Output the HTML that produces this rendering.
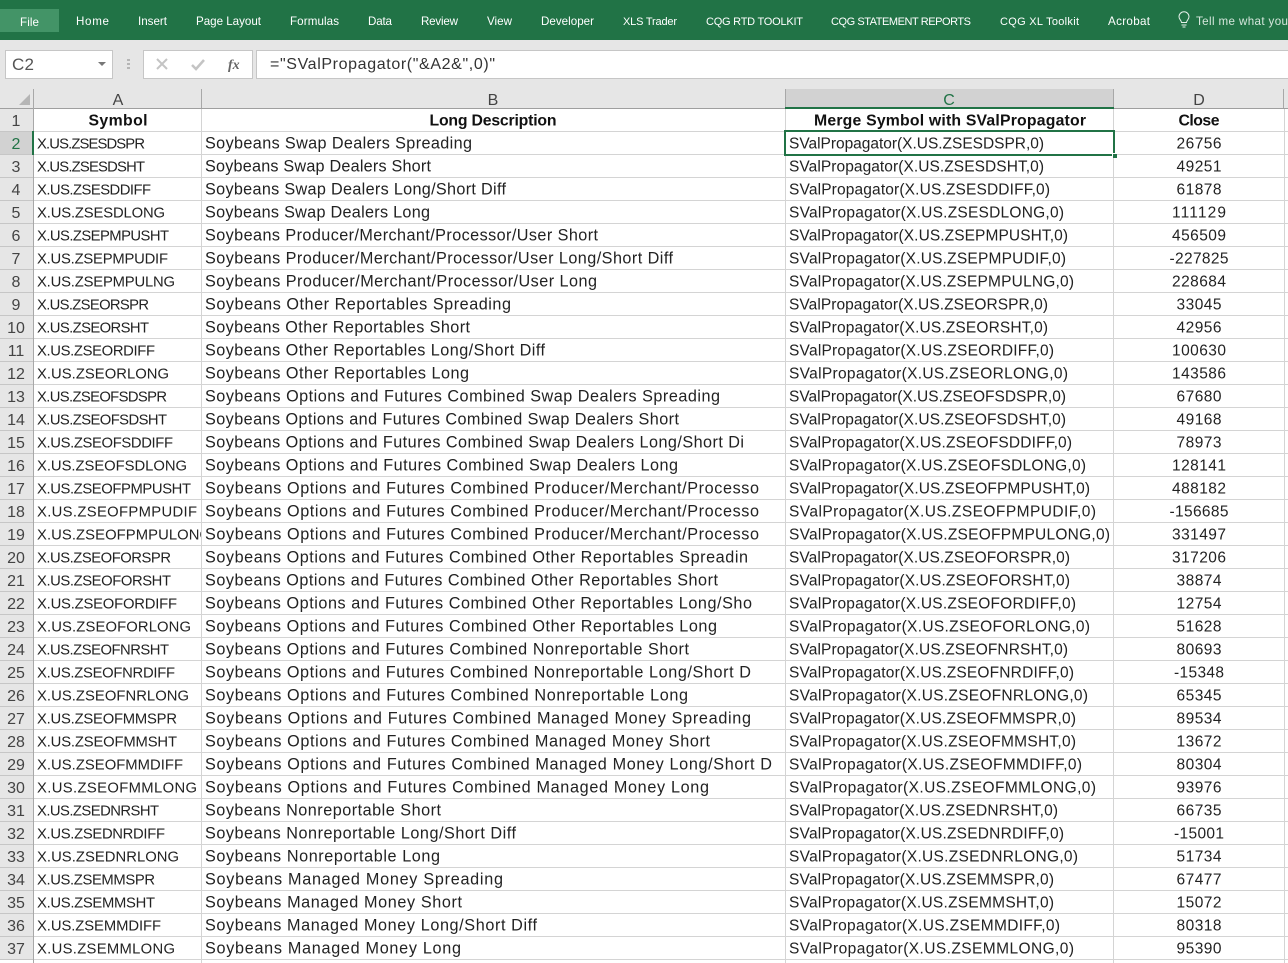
<!DOCTYPE html>
<html><head><meta charset="utf-8"><title>Excel</title>
<style>
html,body{margin:0;padding:0;background:#fff;overflow:hidden}
svg{display:block;font-family:"Liberation Sans",sans-serif}
.t text{font-size:11.6px;fill:#fff}
.t text.c{font-size:11px}
.g text{font-size:15.5px;fill:#222}
.g.a text{font-size:14.8px}
.g.b text{font-size:16.2px}
.h text{font-size:15.8px;font-weight:bold;fill:#111;text-anchor:middle}
.d text{font-size:15.5px;fill:#222;text-anchor:middle}
.r text{font-size:16px;fill:#444;text-anchor:middle}
</style></head><body>
<svg xmlns="http://www.w3.org/2000/svg" width="1288" height="963" viewBox="0 0 1288 963">
<defs><clipPath id="ca"><rect x="33" y="120" width="168" height="900"/></clipPath></defs>
<rect width="1288" height="963" fill="#fff"/>
<rect width="1288" height="40" fill="#217346"/>
<rect y="9" width="59" height="23" fill="#439467"/>
<g class="t">
<text x="20" y="26" textLength="19">File</text>
<text x="76" y="25" textLength="33">Home</text>
<text x="138" y="25" textLength="29">Insert</text>
<text x="196" y="25" textLength="65">Page Layout</text>
<text x="290" y="25" textLength="49">Formulas</text>
<text x="368" y="25" textLength="24">Data</text>
<text x="421" y="25" textLength="37">Review</text>
<text x="487" y="25" textLength="25">View</text>
<text x="541" y="25" textLength="53">Developer</text>
<text class="c" x="623" y="25" textLength="54">XLS Trader</text>
<text class="c" x="706" y="25" textLength="97">CQG RTD TOOLKIT</text>
<text class="c" x="831" y="25" textLength="140">CQG STATEMENT REPORTS</text>
<text class="c" x="1000" y="25" textLength="79">CQG XL Toolkit</text>
<text x="1108" y="25" textLength="42">Acrobat</text>
<text x="1196" y="25" textLength="92" style="fill:#d5e6dc">Tell me what you</text>
</g>
<path d="M1181.5 22.5c0-2-2.500-3-2.500-5.700a5 5 0 0 1 10 0c0 2.700-2.500 3.700-2.500 5.700zM1181.500 25h5M1182.500 27h3" fill="none" stroke="#e6f0ea" stroke-width="1"/>

<rect y="40" width="1288" height="69" fill="#e6e6e6"/>
<rect x="5.500" y="50.500" width="107" height="28" fill="#fff" stroke="#c6c6c6"/>
<text x="12" y="70" font-size="17" fill="#555" textLength="22">C2</text>
<path d="M98 62h8l-4 4z" fill="#777"/>
<path d="M127 59h3v2h-3zM127 63h3v2h-3zM127 67h3v2h-3z" fill="#b5b5b5"/>
<rect x="143.500" y="50.500" width="109" height="28" fill="#fff" stroke="#c6c6c6"/>
<path d="M157 59l10 10M167 59l-10 10" stroke="#c4c4c4" stroke-width="2" fill="none"/>
<path d="M192 65l4 4 8-9" stroke="#c4c4c4" stroke-width="2.500" fill="none"/>
<text x="228" y="69" font-size="14" font-style="italic" font-weight="bold" fill="#666" style="font-family:'Liberation Serif',serif">fx</text>
<rect x="256.500" y="50.500" width="1033" height="28" fill="#fff" stroke="#c6c6c6"/>
<text x="270" y="69" font-size="16" fill="#333" textLength="225">="SValPropagator("&amp;A2&amp;",0)"</text>

<path d="M30 94v11H19z" fill="#b5b5b5"/>
<rect x="0" y="109" width="33" height="851" fill="#e6e6e6"/>
<rect x="785" y="89" width="328" height="19" fill="#d2d2d2"/>
<rect x="0" y="132" width="33" height="23" fill="#d2d2d2"/>

<path d="M0 108.500H1288" stroke="#9f9f9f"/>
<path d="M33.500 89V963M201.500 89V108M785.500 89V108M1113.500 89V108M1283.500 89V108" stroke="#a8a8a8" fill="none"/>
<path d="M201.500 109V963M785.500 109V963M1113.500 109V963M1284.500 109V963" stroke="#d4d4d4" fill="none"/>
<path stroke="#d4d4d4" fill="none" d="M34 131.500H1288M34 154.500H1288M34 177.500H1288M34 200.500H1288M34 223.500H1288M34 246.500H1288M34 269.500H1288M34 292.500H1288M34 315.500H1288M34 338.500H1288M34 361.500H1288M34 384.500H1288M34 407.500H1288M34 430.500H1288M34 453.500H1288M34 476.500H1288M34 499.500H1288M34 522.500H1288M34 545.500H1288M34 568.500H1288M34 591.500H1288M34 614.500H1288M34 637.500H1288M34 660.500H1288M34 683.500H1288M34 706.500H1288M34 729.500H1288M34 752.500H1288M34 775.500H1288M34 798.500H1288M34 821.500H1288M34 844.500H1288M34 867.500H1288M34 890.500H1288M34 913.500H1288M34 936.500H1288M34 959.500H1288"/>
<path stroke="#c6c6c6" fill="none" d="M0 131.500H33M0 154.500H33M0 177.500H33M0 200.500H33M0 223.500H33M0 246.500H33M0 269.500H33M0 292.500H33M0 315.500H33M0 338.500H33M0 361.500H33M0 384.500H33M0 407.500H33M0 430.500H33M0 453.500H33M0 476.500H33M0 499.500H33M0 522.500H33M0 545.500H33M0 568.500H33M0 591.500H33M0 614.500H33M0 637.500H33M0 660.500H33M0 683.500H33M0 706.500H33M0 729.500H33M0 752.500H33M0 775.500H33M0 798.500H33M0 821.500H33M0 844.500H33M0 867.500H33M0 890.500H33M0 913.500H33M0 936.500H33M0 959.500H33"/>

<g font-size="16" fill="#444" text-anchor="middle">
<text x="118" y="105">A</text><text x="493" y="105">B</text><text x="949" y="105" fill="#217346">C</text><text x="1199" y="105">D</text>
</g>

<g class="r">
<text x="16" y="126">1</text><text x="16" y="149" style="fill:#217346">2</text><text x="16" y="172">3</text><text x="16" y="195">4</text><text x="16" y="218">5</text><text x="16" y="241">6</text><text x="16" y="264">7</text><text x="16" y="287">8</text><text x="16" y="310">9</text><text x="16" y="333">10</text><text x="16" y="356">11</text><text x="16" y="379">12</text><text x="16" y="402">13</text><text x="16" y="425">14</text><text x="16" y="448">15</text><text x="16" y="471">16</text><text x="16" y="494">17</text><text x="16" y="517">18</text><text x="16" y="540">19</text><text x="16" y="563">20</text><text x="16" y="586">21</text><text x="16" y="609">22</text><text x="16" y="632">23</text><text x="16" y="655">24</text><text x="16" y="678">25</text><text x="16" y="701">26</text><text x="16" y="724">27</text><text x="16" y="747">28</text><text x="16" y="770">29</text><text x="16" y="793">30</text><text x="16" y="816">31</text><text x="16" y="839">32</text><text x="16" y="862">33</text><text x="16" y="885">34</text><text x="16" y="908">35</text><text x="16" y="931">36</text><text x="16" y="954">37</text>
</g>

<g class="h">
<text x="118" y="125.500" textLength="59">Symbol</text>
<text x="493" y="125.500" textLength="127">Long Description</text>
<text x="950" y="125.500" textLength="272">Merge Symbol with SValPropagator</text>
<text x="1199" y="125.500" textLength="41">Close</text>
</g>

<g class="g a">
<text x="37" y="148.500" textLength="108">X.US.ZSESDSPR</text>
<text x="37" y="171.500" textLength="108">X.US.ZSESDSHT</text>
<text x="37" y="194.500" textLength="114">X.US.ZSESDDIFF</text>
<text x="37" y="217.500" textLength="128">X.US.ZSESDLONG</text>
<text x="37" y="240.500" textLength="132">X.US.ZSEPMPUSHT</text>
<text x="37" y="263.500" textLength="131">X.US.ZSEPMPUDIF</text>
<text x="37" y="286.500" textLength="138">X.US.ZSEPMPULNG</text>
<text x="37" y="309.500" textLength="112">X.US.ZSEORSPR</text>
<text x="37" y="332.500" textLength="112">X.US.ZSEORSHT</text>
<text x="37" y="355.500" textLength="118">X.US.ZSEORDIFF</text>
<text x="37" y="378.500" textLength="132">X.US.ZSEORLONG</text>
<text x="37" y="401.500" textLength="130">X.US.ZSEOFSDSPR</text>
<text x="37" y="424.500" textLength="130">X.US.ZSEOFSDSHT</text>
<text x="37" y="447.500" textLength="136">X.US.ZSEOFSDDIFF</text>
<text x="37" y="470.500" textLength="150">X.US.ZSEOFSDLONG</text>
<text x="37" y="493.500" textLength="154">X.US.ZSEOFPMPUSHT</text>
<text x="37" y="516.500" textLength="160">X.US.ZSEOFPMPUDIF</text>
<g clip-path="url(#ca)"><text x="37" y="539.500" textLength="174">X.US.ZSEOFPMPULONG</text></g>
<text x="37" y="562.500" textLength="134">X.US.ZSEOFORSPR</text>
<text x="37" y="585.500" textLength="134">X.US.ZSEOFORSHT</text>
<text x="37" y="608.500" textLength="140">X.US.ZSEOFORDIFF</text>
<text x="37" y="631.500" textLength="154">X.US.ZSEOFORLONG</text>
<text x="37" y="654.500" textLength="132">X.US.ZSEOFNRSHT</text>
<text x="37" y="677.500" textLength="138">X.US.ZSEOFNRDIFF</text>
<text x="37" y="700.500" textLength="152">X.US.ZSEOFNRLONG</text>
<text x="37" y="723.500" textLength="140">X.US.ZSEOFMMSPR</text>
<text x="37" y="746.500" textLength="140">X.US.ZSEOFMMSHT</text>
<text x="37" y="769.500" textLength="146">X.US.ZSEOFMMDIFF</text>
<text x="37" y="792.500" textLength="160">X.US.ZSEOFMMLONG</text>
<text x="37" y="815.500" textLength="122">X.US.ZSEDNRSHT</text>
<text x="37" y="838.500" textLength="128">X.US.ZSEDNRDIFF</text>
<text x="37" y="861.500" textLength="142">X.US.ZSEDNRLONG</text>
<text x="37" y="884.500" textLength="118">X.US.ZSEMMSPR</text>
<text x="37" y="907.500" textLength="118">X.US.ZSEMMSHT</text>
<text x="37" y="930.500" textLength="124">X.US.ZSEMMDIFF</text>
<text x="37" y="953.500" textLength="138">X.US.ZSEMMLONG</text>
</g>

<g class="g b">
<text x="205" y="148.500" textLength="267">Soybeans Swap Dealers Spreading</text>
<text x="205" y="171.500" textLength="226">Soybeans Swap Dealers Short</text>
<text x="205" y="194.500" textLength="301">Soybeans Swap Dealers Long/Short Diff</text>
<text x="205" y="217.500" textLength="225">Soybeans Swap Dealers Long</text>
<text x="205" y="240.500" textLength="393">Soybeans Producer/Merchant/Processor/User Short</text>
<text x="205" y="263.500" textLength="468">Soybeans Producer/Merchant/Processor/User Long/Short Diff</text>
<text x="205" y="286.500" textLength="392">Soybeans Producer/Merchant/Processor/User Long</text>
<text x="205" y="309.500" textLength="306">Soybeans Other Reportables Spreading</text>
<text x="205" y="332.500" textLength="265">Soybeans Other Reportables Short</text>
<text x="205" y="355.500" textLength="340">Soybeans Other Reportables Long/Short Diff</text>
<text x="205" y="378.500" textLength="264">Soybeans Other Reportables Long</text>
<text x="205" y="401.500" textLength="515">Soybeans Options and Futures Combined Swap Dealers Spreading</text>
<text x="205" y="424.500" textLength="474">Soybeans Options and Futures Combined Swap Dealers Short</text>
<text x="205" y="447.500" textLength="539">Soybeans Options and Futures Combined Swap Dealers Long/Short Di</text>
<text x="205" y="470.500" textLength="473">Soybeans Options and Futures Combined Swap Dealers Long</text>
<text x="205" y="493.500" textLength="554">Soybeans Options and Futures Combined Producer/Merchant/Processo</text>
<text x="205" y="516.500" textLength="554">Soybeans Options and Futures Combined Producer/Merchant/Processo</text>
<text x="205" y="539.500" textLength="554">Soybeans Options and Futures Combined Producer/Merchant/Processo</text>
<text x="205" y="562.500" textLength="543">Soybeans Options and Futures Combined Other Reportables Spreadin</text>
<text x="205" y="585.500" textLength="513">Soybeans Options and Futures Combined Other Reportables Short</text>
<text x="205" y="608.500" textLength="547">Soybeans Options and Futures Combined Other Reportables Long/Sho</text>
<text x="205" y="631.500" textLength="512">Soybeans Options and Futures Combined Other Reportables Long</text>
<text x="205" y="654.500" textLength="484">Soybeans Options and Futures Combined Nonreportable Short</text>
<text x="205" y="677.500" textLength="546">Soybeans Options and Futures Combined Nonreportable Long/Short D</text>
<text x="205" y="700.500" textLength="483">Soybeans Options and Futures Combined Nonreportable Long</text>
<text x="205" y="723.500" textLength="546">Soybeans Options and Futures Combined Managed Money Spreading</text>
<text x="205" y="746.500" textLength="505">Soybeans Options and Futures Combined Managed Money Short</text>
<text x="205" y="769.500" textLength="567">Soybeans Options and Futures Combined Managed Money Long/Short D</text>
<text x="205" y="792.500" textLength="504">Soybeans Options and Futures Combined Managed Money Long</text>
<text x="205" y="815.500" textLength="236">Soybeans Nonreportable Short</text>
<text x="205" y="838.500" textLength="311">Soybeans Nonreportable Long/Short Diff</text>
<text x="205" y="861.500" textLength="235">Soybeans Nonreportable Long</text>
<text x="205" y="884.500" textLength="298">Soybeans Managed Money Spreading</text>
<text x="205" y="907.500" textLength="257">Soybeans Managed Money Short</text>
<text x="205" y="930.500" textLength="332">Soybeans Managed Money Long/Short Diff</text>
<text x="205" y="953.500" textLength="256">Soybeans Managed Money Long</text>
</g>

<g class="g">
<text x="789" y="148.500" textLength="255">SValPropagator(X.US.ZSESDSPR,0)</text>
<text x="789" y="171.500" textLength="255">SValPropagator(X.US.ZSESDSHT,0)</text>
<text x="789" y="194.500" textLength="261">SValPropagator(X.US.ZSESDDIFF,0)</text>
<text x="789" y="217.500" textLength="275">SValPropagator(X.US.ZSESDLONG,0)</text>
<text x="789" y="240.500" textLength="279">SValPropagator(X.US.ZSEPMPUSHT,0)</text>
<text x="789" y="263.500" textLength="277">SValPropagator(X.US.ZSEPMPUDIF,0)</text>
<text x="789" y="286.500" textLength="285">SValPropagator(X.US.ZSEPMPULNG,0)</text>
<text x="789" y="309.500" textLength="259">SValPropagator(X.US.ZSEORSPR,0)</text>
<text x="789" y="332.500" textLength="259">SValPropagator(X.US.ZSEORSHT,0)</text>
<text x="789" y="355.500" textLength="265">SValPropagator(X.US.ZSEORDIFF,0)</text>
<text x="789" y="378.500" textLength="279">SValPropagator(X.US.ZSEORLONG,0)</text>
<text x="789" y="401.500" textLength="277">SValPropagator(X.US.ZSEOFSDSPR,0)</text>
<text x="789" y="424.500" textLength="277">SValPropagator(X.US.ZSEOFSDSHT,0)</text>
<text x="789" y="447.500" textLength="283">SValPropagator(X.US.ZSEOFSDDIFF,0)</text>
<text x="789" y="470.500" textLength="297">SValPropagator(X.US.ZSEOFSDLONG,0)</text>
<text x="789" y="493.500" textLength="301">SValPropagator(X.US.ZSEOFPMPUSHT,0)</text>
<text x="789" y="516.500" textLength="307">SValPropagator(X.US.ZSEOFPMPUDIF,0)</text>
<text x="789" y="539.500" textLength="321">SValPropagator(X.US.ZSEOFPMPULONG,0)</text>
<text x="789" y="562.500" textLength="281">SValPropagator(X.US.ZSEOFORSPR,0)</text>
<text x="789" y="585.500" textLength="281">SValPropagator(X.US.ZSEOFORSHT,0)</text>
<text x="789" y="608.500" textLength="287">SValPropagator(X.US.ZSEOFORDIFF,0)</text>
<text x="789" y="631.500" textLength="301">SValPropagator(X.US.ZSEOFORLONG,0)</text>
<text x="789" y="654.500" textLength="279">SValPropagator(X.US.ZSEOFNRSHT,0)</text>
<text x="789" y="677.500" textLength="285">SValPropagator(X.US.ZSEOFNRDIFF,0)</text>
<text x="789" y="700.500" textLength="299">SValPropagator(X.US.ZSEOFNRLONG,0)</text>
<text x="789" y="723.500" textLength="287">SValPropagator(X.US.ZSEOFMMSPR,0)</text>
<text x="789" y="746.500" textLength="287">SValPropagator(X.US.ZSEOFMMSHT,0)</text>
<text x="789" y="769.500" textLength="293">SValPropagator(X.US.ZSEOFMMDIFF,0)</text>
<text x="789" y="792.500" textLength="307">SValPropagator(X.US.ZSEOFMMLONG,0)</text>
<text x="789" y="815.500" textLength="269">SValPropagator(X.US.ZSEDNRSHT,0)</text>
<text x="789" y="838.500" textLength="275">SValPropagator(X.US.ZSEDNRDIFF,0)</text>
<text x="789" y="861.500" textLength="289">SValPropagator(X.US.ZSEDNRLONG,0)</text>
<text x="789" y="884.500" textLength="265">SValPropagator(X.US.ZSEMMSPR,0)</text>
<text x="789" y="907.500" textLength="265">SValPropagator(X.US.ZSEMMSHT,0)</text>
<text x="789" y="930.500" textLength="271">SValPropagator(X.US.ZSEMMDIFF,0)</text>
<text x="789" y="953.500" textLength="285">SValPropagator(X.US.ZSEMMLONG,0)</text>
</g>

<g class="d">
<text x="1199" y="148.500" textLength="45">26756</text>
<text x="1199" y="171.500" textLength="45">49251</text>
<text x="1199" y="194.500" textLength="45">61878</text>
<text x="1199" y="217.500" textLength="54">111129</text>
<text x="1199" y="240.500" textLength="54">456509</text>
<text x="1199" y="263.500" textLength="59">-227825</text>
<text x="1199" y="286.500" textLength="54">228684</text>
<text x="1199" y="309.500" textLength="45">33045</text>
<text x="1199" y="332.500" textLength="45">42956</text>
<text x="1199" y="355.500" textLength="54">100630</text>
<text x="1199" y="378.500" textLength="54">143586</text>
<text x="1199" y="401.500" textLength="45">67680</text>
<text x="1199" y="424.500" textLength="45">49168</text>
<text x="1199" y="447.500" textLength="45">78973</text>
<text x="1199" y="470.500" textLength="54">128141</text>
<text x="1199" y="493.500" textLength="54">488182</text>
<text x="1199" y="516.500" textLength="59">-156685</text>
<text x="1199" y="539.500" textLength="54">331497</text>
<text x="1199" y="562.500" textLength="54">317206</text>
<text x="1199" y="585.500" textLength="45">38874</text>
<text x="1199" y="608.500" textLength="45">12754</text>
<text x="1199" y="631.500" textLength="45">51628</text>
<text x="1199" y="654.500" textLength="45">80693</text>
<text x="1199" y="677.500" textLength="50">-15348</text>
<text x="1199" y="700.500" textLength="45">65345</text>
<text x="1199" y="723.500" textLength="45">89534</text>
<text x="1199" y="746.500" textLength="45">13672</text>
<text x="1199" y="769.500" textLength="45">80304</text>
<text x="1199" y="792.500" textLength="45">93976</text>
<text x="1199" y="815.500" textLength="45">66735</text>
<text x="1199" y="838.500" textLength="50">-15001</text>
<text x="1199" y="861.500" textLength="45">51734</text>
<text x="1199" y="884.500" textLength="45">67477</text>
<text x="1199" y="907.500" textLength="45">15072</text>
<text x="1199" y="930.500" textLength="45">80318</text>
<text x="1199" y="953.500" textLength="45">95390</text>
</g>

<rect x="785" y="107" width="329" height="2" fill="#217346"/>
<rect x="32" y="131" width="2" height="24" fill="#217346"/>
<rect x="785" y="131" width="329" height="24" fill="none" stroke="#217346" stroke-width="2"/>
<rect x="1112" y="153" width="5" height="5" fill="#fff"/>
<rect x="1113" y="154" width="4" height="4" fill="#217346"/>
</svg>
</body></html>
